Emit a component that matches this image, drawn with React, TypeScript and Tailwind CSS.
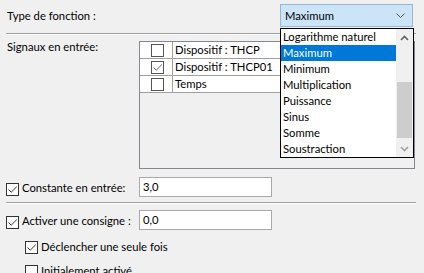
import React from "react";

function Check({ checked, soft }: { checked?: boolean; soft?: boolean }) {
  return (
    <span
      className={`flex h-[13px] w-[13px] shrink-0 items-center justify-center border bg-white ${
        soft ? "border-[#555555]" : "border-[#333333]"
      }`}
    >
      {checked && (
        <svg width="11" height="11" viewBox="0 0 11 11">
          <path d="M1.5 5.5 L4.2 8.2 L9.8 2.6" fill="none" stroke={soft ? "#666" : "#333"} strokeWidth="1" />
        </svg>
      )}
    </span>
  );
}

function Rule() {
  return <div className="ml-[6px] h-[2px] w-[410px] border-t border-b border-t-[#a0a0a0] border-b-white" />;
}

function TextBox({ value }: { value: string }) {
  return (
    <div className="flex h-[20px] w-[133px] items-center border border-[#a9a9a9] bg-white pl-[3px]">{value}</div>
  );
}

const signals = [
  { label: "Dispositif : THCP", on: false },
  { label: "Dispositif : THCP01", on: true },
  { label: "Temps", on: false },
];

const functions = [
  "Logarithme naturel",
  "Maximum",
  "Minimum",
  "Multiplication",
  "Puissance",
  "Sinus",
  "Somme",
  "Soustraction",
];

export default function App() {
  return (
    <div className="relative h-[273px] w-[424px] overflow-hidden whitespace-nowrap bg-[#f0f0f0] font-['Lato','Noto_Sans',sans-serif] text-[11.25px] leading-[16px] text-black">
      <div className="flex items-center pt-[4px] pr-[11px] pl-[7px]">
        <span>Type de fonction :</span>
        <div className="ml-auto flex h-[23px] w-[133px] items-center border border-[#98b7d4] bg-[#cce4f7] pr-[7px] pl-[4px]">
          <span>Maximum</span>
          <svg className="ml-auto" width="9" height="5" viewBox="0 0 9 5">
            <path d="M0.5 0.5 L4.5 4.5 L8.5 0.5" fill="none" stroke="#555" strokeWidth="1" />
          </svg>
        </div>
      </div>

      <div className="mt-[6px]">
        <Rule />
      </div>

      <div className="mt-[6px] flex pl-[7px]">
        <span className="-mt-[2px] w-[132px] shrink-0">Signaux en entrée:</span>
        <div className="h-[128px] w-[276px] border border-[#828790] bg-[#f0f0f0]">
          {signals.map((s) => (
            <div key={s.label} className="flex h-[17px] border-b border-[#a0a0a0] bg-white">
              <div className="flex w-[33px] items-center justify-center border-r border-[#a0a0a0] pl-[2px]">
                <Check checked={s.on} soft />
              </div>
              <span className="pl-[2px]">{s.label}</span>
            </div>
          ))}
        </div>
      </div>

      <div className="mt-[8px] flex items-center pl-[6px]">
        <span className="mt-[4px]">
          <Check checked />
        </span>
        <span className="mt-[2px] ml-[3px] w-[117px]">Constante en entrée:</span>
        <TextBox value="3,0" />
      </div>

      <div className="mt-[5px]">
        <Rule />
      </div>

      <div className="mt-[6px] flex items-center pl-[6px]">
        <span className="mt-[4px]">
          <Check checked />
        </span>
        <span className="mt-[2px] ml-[3px] w-[117px]">Activer une consigne :</span>
        <TextBox value="0,0" />
      </div>

      <div className="mt-[9px] flex items-center pl-[25px]">
        <Check checked />
        <span className="ml-[3px]">Déclencher une seule fois</span>
      </div>

      <div className="mt-[8px] flex items-center pl-[25px]">
        <Check />
        <span className="ml-[3px]">Initialement activé</span>
      </div>

      <div className="absolute top-[28px] left-[280px] flex h-[130px] w-[134px] border border-black bg-white">
        <div className="flex-1">
          {functions.map((f) => (
            <div key={f} className={`h-[16px] pl-[2px] ${f === "Maximum" ? "bg-[#0078d7] text-white" : ""}`}>
              {f}
            </div>
          ))}
        </div>
        <div className="relative w-[17px] bg-[#f0f0f0]">
          <div className="flex h-[17px] items-center justify-center">
            <svg width="9" height="6" viewBox="0 0 9 6">
              <path d="M1 5 L4.5 1.5 L8 5" fill="none" stroke="#606060" strokeWidth="1.6" />
            </svg>
          </div>
          <div className="absolute top-[53px] left-[1px] h-[56px] w-[15px] bg-[#cdcdcd]" />
          <div className="absolute bottom-0 flex h-[17px] w-[17px] items-center justify-center">
            <svg width="9" height="6" viewBox="0 0 9 6">
              <path d="M1 1 L4.5 4.5 L8 1" fill="none" stroke="#a0a0a0" strokeWidth="1.6" />
            </svg>
          </div>
        </div>
      </div>
    </div>
  );
}
